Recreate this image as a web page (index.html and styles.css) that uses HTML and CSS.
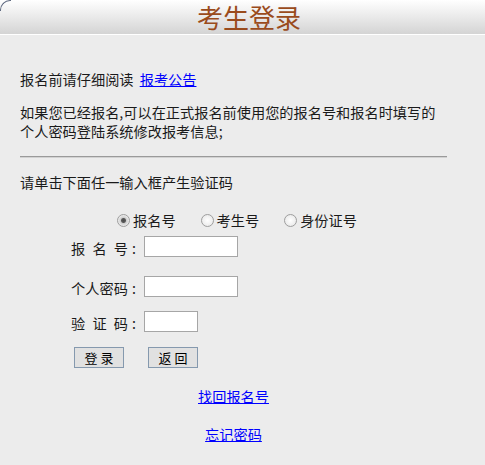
FILE: index.html
```html
<!DOCTYPE html>
<html lang="zh-CN">
<head>
<meta charset="utf-8">
<title>考生登录</title>
<link rel="stylesheet" href="styles.css">
</head>
<body>
<div class="header"><h1 class="title">考生登录</h1></div>
<div class="content">
  <p class="intro">报名前请仔细阅读 <a class="link" href="#">报考公告</a></p>
  <p class="notice">如果您已经报名,可以在正式报名前使用您的报名号和报名时填写的个人密码登陆系统修改报考信息;</p>
  <hr class="divider">
  <p class="hint">请单击下面任一输入框产生验证码</p>
  <div class="choices">
    <label class="choice"><input class="radio" type="radio" name="kind" checked><span>报名号</span></label>
    <label class="choice"><input class="radio" type="radio" name="kind"><span>考生号</span></label>
    <label class="choice"><input class="radio" type="radio" name="kind"><span>身份证号</span></label>
  </div>
  <form class="login">
    <div class="row"><span class="lbl">报 名 号</span><span class="colon">:</span><input class="field" type="text"></div>
    <div class="row row-pwd"><span class="lbl">个人密码</span><span class="colon">:</span><input class="field" type="password"></div>
    <div class="row row-code"><span class="lbl">验 证 码</span><span class="colon">:</span><input class="field field-short" type="text"></div>
    <div class="buttons"><button class="btn" type="button">登 录</button><button class="btn" type="button">返 回</button></div>
  </form>
  <div class="links"><a class="link" href="#">找回报名号</a></div>
  <div class="links"><a class="link" href="#">忘记密码</a></div>
</div>
</body>
</html>
```

FILE: styles.css
```css
body {
  margin: 0;
  background: #ececec;
  font-family: "Noto Sans CJK SC", "Microsoft YaHei", sans-serif;
  font-size: 14.2px;
  color: #1a1a1a;
}

.header {
  position: relative;
  height: 34px;
  background: linear-gradient(#ffffff, #d4d4d4);
  border-bottom: 1px solid #ffffff;
  text-align: center;
}

.header::before {
  content: "";
  position: absolute;
  left: 0;
  top: 0;
  width: 10px;
  height: 10px;
  border-top: 1px solid #5f6a80;
  border-left: 1px solid #5f6a80;
  border-top-left-radius: 10px;
}

.title {
  margin: 0;
  padding-left: 13px;
  font-size: 26px;
  font-weight: normal;
  line-height: 33px;
  color: #9a4b1c;
}

.content {
  width: 427px;
  margin-left: 20px;
}

p {
  margin: 0;
  line-height: 19px;
}

.intro {
  padding-top: 35px;
}

.link {
  color: #0000ff;
}

.intro .link {
  margin-left: 3px;
}

.notice {
  margin-top: 14px;
}

.divider {
  margin: 15px 0 0;
  height: 0;
  border: 0;
  border-top: 1px solid #9a9a9a;
  border-bottom: 1px solid #d2d2d2;
}

.hint {
  margin-top: 15px;
}

.choices {
  margin-top: 19px;
  padding-left: 97px;
  display: flex;
  align-items: center;
  height: 19px;
  line-height: 19px;
}

.choice {
  display: inline-flex;
  align-items: center;
  margin-right: 25px;
}

.radio {
  appearance: none;
  -webkit-appearance: none;
  box-sizing: border-box;
  width: 13px;
  height: 13px;
  margin: 0 3px 0 0;
  border: 1px solid #9e9e9e;
  border-radius: 50%;
  background: radial-gradient(circle, #ffffff 0, #e4e4e4 100%);
}

.radio:checked {
  background: radial-gradient(circle, #4a4a4a 0, #5a5a5a 2px, #cfcfcf 3px, #f3f3f3 6px);
}

.login {
  margin: 6px 0 0;
  padding-left: 51px;
}

.row {
  display: flex;
  align-items: flex-start;
  height: 21px;
}

.row-pwd {
  margin-top: 19px;
}

.row-code {
  margin-top: 14px;
}

.lbl {
  width: 57px;
  padding-top: 3px;
  line-height: 19px;
  white-space: nowrap;
  text-align: justify;
  text-align-last: justify;
}

.colon {
  box-sizing: border-box;
  width: 16px;
  padding: 3px 0 0 4px;
  line-height: 19px;
}

.field {
  box-sizing: border-box;
  width: 94px;
  height: 21px;
  margin: 0;
  padding: 0 2px;
  border: 1px solid #a6a6a6;
  background: #ffffff;
  font: inherit;
}

.field-short {
  width: 54px;
}

.buttons {
  margin-top: 15px;
  padding-left: 3px;
  display: flex;
  gap: 24px;
}

.btn {
  box-sizing: border-box;
  width: 50px;
  height: 21px;
  margin: 0;
  padding: 0;
  border: 1px solid #8599ae;
  border-radius: 0;
  background: #e1e1e1;
  font-family: inherit;
  font-size: 13px;
  line-height: 19px;
  color: #000000;
}

.links {
  margin-top: 19px;
  text-align: center;
  line-height: 19px;
}
```
